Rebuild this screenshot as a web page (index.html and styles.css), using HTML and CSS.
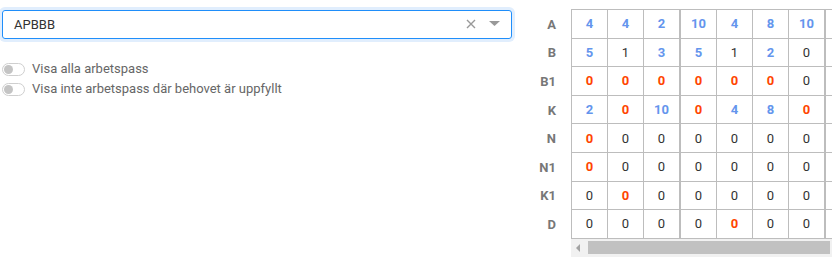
FILE: index.html
```html
<!DOCTYPE html>
<html>
<head>
<meta charset="utf-8">
<link rel="stylesheet" href="styles.css">
</head>
<body>
<div class="page">
  <div class="left">
    <div class="select">
      <span class="value">APBBB</span>
      <span class="icons">
        <svg class="clear" width="10" height="10" viewBox="0 0 10 10"><path d="M1 1L9 9M9 1L1 9" stroke="#999" stroke-width="1.4" fill="none"/></svg>
        <svg class="caret" width="11" height="5" viewBox="0 0 11 5"><path d="M0 0H11L5.5 5Z" fill="#999"/></svg>
      </span>
    </div>
    <div class="toggles">
      <div class="toggle-row"><span class="switch"><span class="knob"></span></span><span class="toggle-label">Visa alla arbetspass</span></div>
      <div class="toggle-row"><span class="switch"><span class="knob"></span></span><span class="toggle-label">Visa inte arbetspass där behovet är uppfyllt</span></div>
    </div>
  </div>
  <div class="right">
    <div class="labels">
      <div class="lbl">A</div>
      <div class="lbl">B</div>
      <div class="lbl">B1</div>
      <div class="lbl">K</div>
      <div class="lbl">N</div>
      <div class="lbl">N1</div>
      <div class="lbl">K1</div>
      <div class="lbl">D</div>
    </div>
    <div class="scroller">
      <div class="grid">
        <div class="c b">4</div><div class="c b">4</div><div class="c b">2</div><div class="c b">10</div><div class="c b">4</div><div class="c b">8</div><div class="c b">10</div><div class="c"></div>
        <div class="c b">5</div><div class="c">1</div><div class="c b">3</div><div class="c b">5</div><div class="c">1</div><div class="c b">2</div><div class="c">0</div><div class="c"></div>
        <div class="c r">0</div><div class="c r">0</div><div class="c r">0</div><div class="c r">0</div><div class="c r">0</div><div class="c r">0</div><div class="c">0</div><div class="c"></div>
        <div class="c b">2</div><div class="c r">0</div><div class="c b">10</div><div class="c r">0</div><div class="c b">4</div><div class="c b">8</div><div class="c r">0</div><div class="c"></div>
        <div class="c r">0</div><div class="c">0</div><div class="c">0</div><div class="c">0</div><div class="c">0</div><div class="c">0</div><div class="c">0</div><div class="c"></div>
        <div class="c r">0</div><div class="c">0</div><div class="c">0</div><div class="c">0</div><div class="c">0</div><div class="c">0</div><div class="c">0</div><div class="c"></div>
        <div class="c">0</div><div class="c r">0</div><div class="c">0</div><div class="c">0</div><div class="c">0</div><div class="c">0</div><div class="c">0</div><div class="c"></div>
        <div class="c">0</div><div class="c">0</div><div class="c">0</div><div class="c">0</div><div class="c r">0</div><div class="c">0</div><div class="c">0</div><div class="c"></div>
      </div>
      <div class="hscroll">
        <span class="arrow"></span>
        <span class="thumb"></span>
      </div>
    </div>
  </div>
</div>
</body>
</html>
```
FILE: styles.css
```css
html, body {
  margin: 0;
  padding: 0;
  background: #fff;
  overflow: hidden;
}
body {
  font-family: Roboto, "Liberation Sans", sans-serif;
  font-size: 13px;
  color: #333;
}
.page {
  display: flex;
  align-items: flex-start;
  width: 832px;
}
.left {
  width: 520px;
  flex: none;
}
.select {
  box-sizing: border-box;
  margin: 10px 0 0 2px;
  width: 510px;
  height: 29px;
  border: 1px solid #1f8efa;
  border-radius: 3px;
  box-shadow: 0 0 0 3px #e1eefd;
  display: flex;
  align-items: center;
  padding: 0 11px 0 11px;
}
.value {
  flex: 1;
  color: #333;
  line-height: 16px;
}
.icons {
  display: flex;
  align-items: center;
  gap: 13px;
}
.clear {
  display: block;
  margin-top: -1px;
}
.caret {
  display: block;
  margin-top: -2px;
}
.toggles {
  margin-top: 20px;
  display: flex;
  flex-direction: column;
}
.toggle-row {
  display: flex;
  align-items: center;
  height: 20px;
  padding-left: 2px;
  gap: 7px;
}
.switch {
  box-sizing: border-box;
  width: 23px;
  height: 13px;
  border: 1px solid #cfcfcf;
  border-radius: 7px;
  display: flex;
  align-items: center;
  padding-left: 1px;
  background: #fff;
}
.knob {
  width: 9px;
  height: 9px;
  border-radius: 50%;
  background: #c4c4c4;
}
.toggle-label {
  color: #666;
  line-height: 16px;
}
.right {
  display: flex;
  padding-top: 9px;
  flex: none;
}
.labels {
  width: 51px;
  padding-top: 1px;
  display: flex;
  flex-direction: column;
}
.lbl {
  height: 28.6px;
  display: flex;
  align-items: center;
  justify-content: flex-end;
  padding-right: 15px;
  font-weight: bold;
  color: #777;
}
.scroller {
  width: 261px;
  overflow: hidden;
}
.grid {
  display: grid;
  grid-template-columns: 36px 36px 37px 36px 36px 36px 37px 36px;
  grid-auto-rows: 28.6px;
  border-top: 1px solid #bdbdbd;
  border-left: 1px solid #bdbdbd;
  width: max-content;
}
.c {
  box-sizing: border-box;
  border-right: 1px solid #bdbdbd;
  border-bottom: 1px solid #bdbdbd;
  display: flex;
  align-items: center;
  justify-content: center;
  color: #333;
}
.c:nth-child(8n+3), .c:nth-child(8n+7) {
  border-right-width: 2px;
}
.b {
  color: cornflowerblue;
  font-weight: bold;
}
.r {
  color: orangered;
  font-weight: bold;
}
.hscroll {
  height: 18px;
  background: #f1f1f1;
  display: flex;
  align-items: center;
}
.arrow {
  width: 0;
  height: 0;
  border-top: 4px solid transparent;
  border-bottom: 4px solid transparent;
  border-right: 4px solid #a3a3a3;
  margin-left: 5px;
}
.thumb {
  margin-left: 8px;
  width: 242px;
  height: 13px;
  background: #c1c1c1;
}
```
